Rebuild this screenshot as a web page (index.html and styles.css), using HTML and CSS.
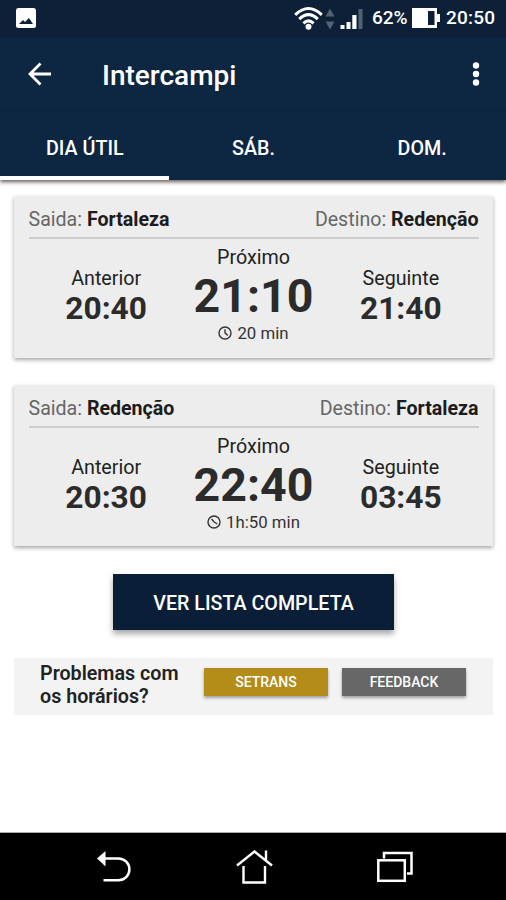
FILE: index.html
```html
<!DOCTYPE html>
<html lang="pt-BR">
<head>
  <meta charset="UTF-8">
  <meta name="viewport" content="width=device-width, initial-scale=1.0">
  <title>Intercampi</title>
  <link rel="stylesheet" href="styles.css">
</head>
<body>
  <div class="status-bar">
    <svg class="icon-picture" width="20" height="20" viewBox="0 0 20 20">
      <rect width="20" height="20" rx="2.5" fill="#fff"/>
      <path d="M3 16l4-4 2 2 4-4 4 6z" fill="#0d2038"/>
    </svg>
    <div class="status-right">
      <svg class="icon-network" width="70" height="26" viewBox="0 0 70 26">
        <g fill="none" stroke="#fff" stroke-width="3">
          <path d="M1.200 9.800Q14.500-2.800 27.800 9.800"/>
          <path d="M5.200 14.200Q14.500 5.200 23.800 14.200"/>
          <path d="M9.400 18.400Q14.500 13.400 19.600 18.400"/>
        </g>
        <circle cx="14.500" cy="21.800" r="3" fill="#fff"/>
        <path d="M31.500 11.500h9L36 3.500zM31.500 16.500h9L36 24.500z" fill="#536273"/>
        <path d="M46.500 20h4v4h-4zM52.500 17h4v7h-4zM58.300 10h4.200v14h-4.200z" fill="#fff"/>
        <path d="M64.500 4h4v20h-4z" fill="#536273"/>
      </svg>
      <span class="battery-text">62%</span>
      <svg class="icon-battery" width="28" height="20" viewBox="0 0 28 20">
        <path d="M0 0h25v6h3v8h-3v6H0z" fill="#fff"/>
        <rect x="16" y="3" width="6.500" height="14" fill="#0d2038"/>
      </svg>
      <span class="clock">20:50</span>
    </div>
  </div>

  <header class="app-bar">
    <svg class="icon-back" width="24" height="24" viewBox="0 0 24 24" fill="none" stroke="#fff" stroke-width="2.800">
      <path d="M24 12H3M13.500 1.500L3 12l10.500 10.500"/>
    </svg>
    <h1>Intercampi</h1>
    <svg class="icon-more" width="8" height="26" viewBox="0 0 8 26" fill="#fff">
      <circle cx="4" cy="4.500" r="3.200"/>
      <circle cx="4" cy="13" r="3.200"/>
      <circle cx="4" cy="21.500" r="3.200"/>
    </svg>
  </header>

  <nav class="tabs">
    <a class="tab active">DIA ÚTIL</a>
    <a class="tab">SÁB.</a>
    <a class="tab">DOM.</a>
  </nav>

  <main class="content">
    <section class="card">
      <div class="card-header">
        <span>Saida: <b>Fortaleza</b></span>
        <span>Destino: <b>Redenção</b></span>
      </div>
      <div class="times">
        <div class="time side">
          <span class="label">Anterior</span>
          <span class="hour">20:40</span>
        </div>
        <div class="time next">
          <span class="label">Próximo</span>
          <span class="hour">21:10</span>
          <span class="remaining">
            <svg width="14" height="14" viewBox="0 0 14 14" fill="none" stroke="#333" stroke-width="1.400">
              <circle cx="7" cy="7" r="6"/>
              <path d="M7 3.200V7l2.800 2.400"/>
            </svg>
            20 min
          </span>
        </div>
        <div class="time side">
          <span class="label">Seguinte</span>
          <span class="hour">21:40</span>
        </div>
      </div>
    </section>

    <section class="card">
      <div class="card-header">
        <span>Saida: <b>Redenção</b></span>
        <span>Destino: <b>Fortaleza</b></span>
      </div>
      <div class="times">
        <div class="time side">
          <span class="label">Anterior</span>
          <span class="hour">20:30</span>
        </div>
        <div class="time next">
          <span class="label">Próximo</span>
          <span class="hour">22:40</span>
          <span class="remaining">
            <svg width="14" height="14" viewBox="0 0 14 14" fill="none" stroke="#333" stroke-width="1.400">
              <circle cx="7" cy="7" r="6"/>
              <path d="M4.500 4L7.200 7l3 2"/>
            </svg>
            1h:50 min
          </span>
        </div>
        <div class="time side">
          <span class="label">Seguinte</span>
          <span class="hour">03:45</span>
        </div>
      </div>
    </section>

    <button class="btn-list">VER LISTA COMPLETA</button>

    <div class="help">
      <p>Problemas com<br>os horários?</p>
      <button class="btn-small setrans">SETRANS</button>
      <button class="btn-small feedback">FEEDBACK</button>
    </div>
  </main>

  <footer class="nav-bar">
    <svg width="36" height="34" viewBox="0 0 36 34">
      <path d="M9 8.500h13.500a10.800 10.800 0 0 1 0 21.800H7.500" fill="none" stroke="#fff" stroke-width="2.500"/>
      <path d="M1 8.500L9.500 1v15.500z" fill="#fff"/>
    </svg>
    <svg width="38" height="34" viewBox="0 0 38 34" fill="none" stroke="#fff" stroke-width="2.400">
      <path d="M1 15.500L18.500 1.500 36 15.500M30 10.500V0.500M7.500 16v16.500H29V16"/>
    </svg>
    <svg width="36" height="32" viewBox="0 0 36 32" fill="none" stroke="#fff" stroke-width="2.500">
      <rect x="1.300" y="9.300" width="26.500" height="20.500"/>
      <path d="M7 7.500V2h27.500v20.500H30"/>
    </svg>
  </footer>
</body>
</html>
```
FILE: styles.css
```css
* {
  box-sizing: border-box;
}
body {
  margin: 0;
  height: 900px;
  display: flex;
  flex-direction: column;
  overflow: hidden;
  background: #fff;
  color: #222;
  font-family: Roboto, "Noto Sans", sans-serif;
}
svg {
  display: block;
  flex: none;
}
button {
  border: 0;
  padding: 0;
  color: #fff;
  font-family: inherit;
  font-weight: 500;
}

/* barra de status */
.status-bar {
  height: 37px;
  flex: none;
  display: flex;
  align-items: center;
  justify-content: space-between;
  padding: 0 10px 2px 16px;
  background: #0d2038;
  color: #fff;
}
.status-right {
  display: flex;
  align-items: center;
  font-size: 19px;
  font-weight: 500;
}
.battery-text {
  margin: 0 3px 0 8px;
  width: 37px;
  white-space: nowrap;
}
.clock {
  margin-left: 6px;
  width: 50px;
  letter-spacing: 0.2px;
}

/* topo */
.app-bar {
  height: 74px;
  flex: none;
  display: flex;
  align-items: center;
  padding: 0 26px 0 27px;
  background: #0d2641;
}
.app-bar h1 {
  flex: 1;
  margin: 2px 0 0 51px;
  color: #fff;
  font-size: 28px;
  font-weight: 500;
}
.tabs {
  height: 69px;
  flex: none;
  display: grid;
  grid-template-columns: repeat(3, 1fr);
  background: #0d2641;
  box-shadow: 0 2px 4px rgba(40, 20, 20, 0.7);
}
.tab {
  display: flex;
  align-items: center;
  justify-content: center;
  padding: 10px 0 0 1px;
  color: #fff;
  font-size: 19.700px;
  font-weight: 500;
  border-bottom: 4px solid transparent;
}
.tab.active {
  border-bottom-color: #fff;
}

/* horarios */
.content {
  flex: 1;
  display: flex;
  flex-direction: column;
  padding: 16px 13px 0 14px;
}
.card {
  height: 161.500px;
  margin-bottom: 27px;
  padding: 12px 14.500px 0;
  background: #ededed;
  box-shadow: 0 2px 4px rgba(0, 0, 0, 0.35);
}
.card-header {
  display: flex;
  justify-content: space-between;
  padding-bottom: 5px;
  border-bottom: 2.500px solid #cecece;
  color: #666;
  font-size: 19.600px;
  line-height: 24px;
}
.card-header b {
  color: #1c1c1c;
}
.times {
  display: grid;
  grid-template-columns: repeat(3, 1fr);
  padding: 7px 4px 0;
}
.time {
  display: flex;
  flex-direction: column;
  align-items: center;
}
.label {
  font-size: 19.700px;
  line-height: 24px;
}
.hour {
  color: #2b2b2b;
  font-weight: 700;
}
.side {
  padding-top: 21px;
}
.side .hour {
  font-size: 31.700px;
  line-height: 35px;
}
.next .hour {
  margin-top: 2px;
  font-size: 46.500px;
  line-height: 48px;
}
.remaining {
  display: flex;
  align-items: center;
  gap: 5px;
  margin-top: 3px;
  font-size: 16.800px;
  line-height: 20px;
  color: #333;
}

.btn-list {
  width: 281px;
  height: 56px;
  margin: 1px auto 28px;
  padding-top: 2px;
  background: #0b1e38;
  font-size: 19.700px;
  box-shadow: 0 4px 6px rgba(0, 0, 0, 0.35);
}
.help {
  height: 57px;
  display: flex;
  align-items: center;
  padding: 0 27px 10px 26px;
  background: #f3f3f3;
}
.help p {
  width: 164px;
  margin: 6px 0 0;
  font-size: 19.700px;
  font-weight: 600;
  line-height: 23px;
  white-space: nowrap;
}
.btn-small {
  width: 124px;
  height: 28px;
  font-size: 14px;
  box-shadow: 0 2px 3px rgba(0, 0, 0, 0.35);
}
.setrans {
  background: #b38c19;
}
.feedback {
  margin-left: 14px;
  background: #676767;
}

/* botoes do sistema */
.nav-bar {
  height: 68px;
  flex: none;
  display: flex;
  align-items: center;
  justify-content: space-between;
  padding: 0 93px 0 96px;
  background: #000;
  border-top: 1px solid #aaa;
}
```
